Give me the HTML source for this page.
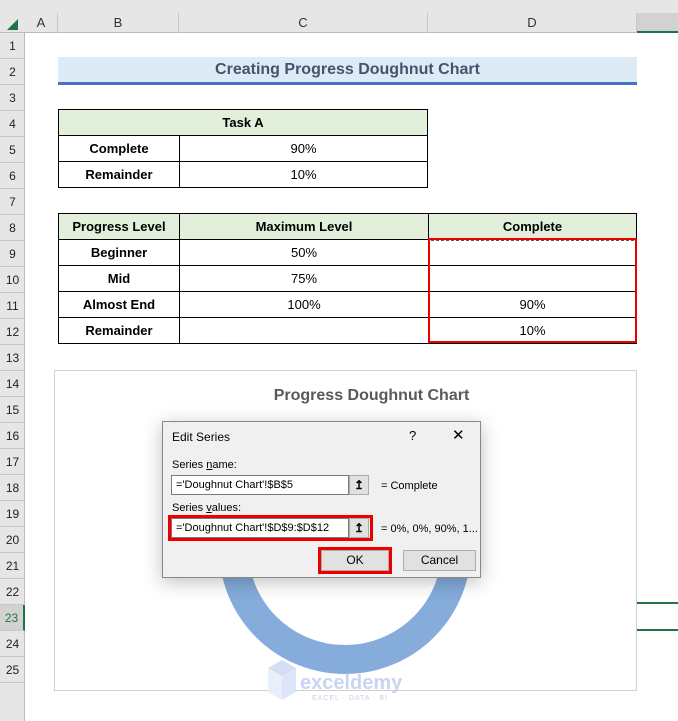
<!DOCTYPE html>
<html><head><style>
*{margin:0;padding:0;box-sizing:border-box}
body{width:678px;height:721px;overflow:hidden;background:#fff;font-family:"Liberation Sans",Calibri,sans-serif;position:relative;font-size:13px;color:#000}
.a{position:absolute}
.rh{position:absolute;left:0;width:25px;height:26px;border-bottom:1px solid #c8c8c8;text-align:center;font-size:12px;line-height:26px;color:#222}
.ch{position:absolute;top:13px;height:20px;border-right:1px solid #c8c8c8;text-align:center;font-size:13px;line-height:20px;color:#333}
table{position:absolute;border-collapse:collapse}
td{border:1px solid #000;height:26px;text-align:center;font-size:13px;padding:0}
.h{background:#e2efda;font-weight:bold}
.b{font-weight:bold}
.dlg{position:absolute;left:162px;top:421px;width:319px;height:157px;background:#f0f0f0;border:1px solid #888;box-shadow:0 4px 18px rgba(0,0,0,.25);font-family:"Liberation Sans",sans-serif;font-size:11px}
.in{position:absolute;height:20px;background:#fff;border:1px solid #7a7a7a;font-size:11px;line-height:18px;padding-left:4px}
.btn{position:absolute;width:20px;height:20px;border:1px solid #adadad;background:#e1e1e1;text-align:center;font-weight:bold;line-height:18px;font-size:12px}
.pb{position:absolute;height:21px;border:1px solid #adadad;background:#e1e1e1;text-align:center;line-height:19px;font-size:12px}
</style></head><body>
<div class="a" style="left:0;top:0;width:678px;height:13px;background:#e6e6e6"></div>
<div class="a" style="left:0;top:13px;width:678px;height:20px;background:#e6e6e6;border-bottom:1px solid #bbb"></div>
<div class="a" style="left:7px;top:19px;width:0;height:0;border-left:11px solid transparent;border-bottom:11px solid #217346"></div>
<div class="ch" style="left:25px;width:33px">A</div>
<div class="ch" style="left:58px;width:121px">B</div>
<div class="ch" style="left:179px;width:249px">C</div>
<div class="ch" style="left:428px;width:209px">D</div>
<div class="a" style="left:637px;top:13px;width:41px;height:20px;background:#d2d2d2;border-bottom:2px solid #217346"></div>
<div class="a" style="left:0;top:33px;width:25px;height:688px;background:#e6e6e6;border-right:1px solid #bbb"></div>
<div class="rh" style="top:33px">1</div><div class="rh" style="top:59px">2</div><div class="rh" style="top:85px">3</div><div class="rh" style="top:111px">4</div><div class="rh" style="top:137px">5</div><div class="rh" style="top:163px">6</div><div class="rh" style="top:189px">7</div><div class="rh" style="top:215px">8</div><div class="rh" style="top:241px">9</div><div class="rh" style="top:267px">10</div><div class="rh" style="top:293px">11</div><div class="rh" style="top:319px">12</div><div class="rh" style="top:345px">13</div><div class="rh" style="top:371px">14</div><div class="rh" style="top:397px">15</div><div class="rh" style="top:423px">16</div><div class="rh" style="top:449px">17</div><div class="rh" style="top:475px">18</div><div class="rh" style="top:501px">19</div><div class="rh" style="top:527px">20</div><div class="rh" style="top:553px">21</div><div class="rh" style="top:579px">22</div><div class="rh" style="top:605px;background:#d2d2d2;border-right:2px solid #217346;color:#217346">23</div><div class="rh" style="top:631px">24</div><div class="rh" style="top:657px">25</div>

<div class="a" style="left:58px;top:57px;width:579px;height:25px;background:#ddebf7;text-align:center;font-weight:bold;font-size:16px;line-height:25px;color:#44546a">Creating Progress Doughnut Chart</div>
<div class="a" style="left:58px;top:82px;width:579px;height:3px;background:#4472c4"></div>

<table style="left:58px;top:109px;width:370px">
<tr><td colspan="2" class="h">Task A</td></tr>
<tr><td class="b" style="width:121px">Complete</td><td>90%</td></tr>
<tr><td class="b">Remainder</td><td>10%</td></tr>
</table>

<table style="left:58px;top:213px;width:579px">
<tr><td class="h" style="width:121px">Progress Level</td><td class="h" style="width:249px">Maximum Level</td><td class="h">Complete</td></tr>
<tr><td class="b">Beginner</td><td>50%</td><td></td></tr>
<tr><td class="b">Mid</td><td>75%</td><td></td></tr>
<tr><td class="b">Almost End</td><td>100%</td><td>90%</td></tr>
<tr><td class="b">Remainder</td><td></td><td>10%</td></tr>
</table>
<div class="a" style="left:428px;top:238px;width:209px;height:105px;border:2px solid #e00"></div>
<div class="a" style="left:431px;top:240px;width:203px;height:0;border-top:1px dashed #555"></div>

<div class="a" style="left:54px;top:370px;width:583px;height:321px;border:1px solid #d0d0d0;background:#fff"></div>
<div class="a" style="left:54px;top:387px;width:635px;text-align:center;font-weight:bold;font-size:16px;color:#595959">Progress Doughnut Chart</div>
<svg class="a" style="left:0;top:0" width="678" height="721"><circle cx="345" cy="548" r="111.5" fill="none" stroke="#85acdb" stroke-width="29"/>
<polygon points="282,676 296,668 296,692 282,700" fill="#dde6f8"/><polygon points="268,668 282,676 282,700 268,692" fill="#e8eefa"/><polygon points="268,668 282,660 296,668 282,676" fill="#d3ddf3"/></svg>
<div class="a" style="left:300px;top:672px;font-size:20px;font-weight:bold;color:#c9d5f0">exceldemy</div>
<div class="a" style="left:312px;top:695px;font-size:7px;color:#c9d0dc;letter-spacing:1px">EXCEL · DATA · BI</div>
<div class="a" style="left:637px;top:602px;width:41px;height:2px;background:#217346"></div>
<div class="a" style="left:637px;top:629px;width:41px;height:2px;background:#217346"></div>

<div class="dlg">
<div class="a" style="left:9px;top:8px;font-size:12px">Edit Series</div>
<div class="a" style="left:246px;top:6px;font-size:13px">?</div>
<div class="a" style="left:289px;top:4px;font-size:15px">✕</div>
<div class="a" style="left:9px;top:37px">Series <u>n</u>ame:</div>
<div class="in" style="left:8px;top:53px;width:178px">='Doughnut Chart'!$B$5</div>
<div class="btn" style="left:186px;top:53px">↥</div>
<div class="a" style="left:218px;top:58px">= Complete</div>
<div class="a" style="left:9px;top:80px">Series <u>v</u>alues:</div>
<div class="in" style="left:8px;top:96px;width:178px">='Doughnut Chart'!$D$9:$D$12</div>
<div class="btn" style="left:186px;top:96px">↥</div>
<div class="a" style="left:5px;top:93px;width:205px;height:26px;border:3px solid #e00"></div>
<div class="a" style="left:218px;top:101px">= 0%, 0%, 90%, 1...</div>
<div class="pb" style="left:158px;top:128px;width:68px">OK</div>
<div class="a" style="left:155px;top:125px;width:74px;height:27px;border:3px solid #e00"></div>
<div class="pb" style="left:240px;top:128px;width:73px">Cancel</div>
</div>
</body></html>
